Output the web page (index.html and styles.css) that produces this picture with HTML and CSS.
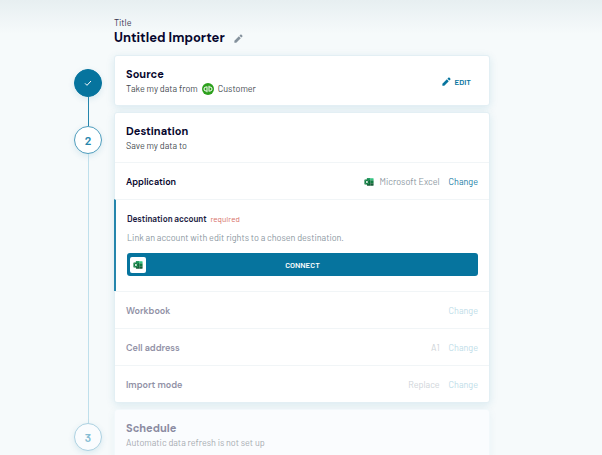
FILE: index.html
```html
<!DOCTYPE html>
<html lang="en">
<head>
    <meta charset="UTF-8">
    <meta name="viewport" content="width=device-width, initial-scale=1.0">
    <title>Untitled Importer</title>
    <link rel="stylesheet" href="styles.css">
</head>
<body>
    <!-- Shared icons -->
    <svg class="sprite" aria-hidden="true">
        <symbol id="pencil" viewBox="0 0 24 24">
            <path d="M1 18v5h5L18 11l-5-5zM22.500 6.500c.6-.6.6-1.400 0-2l-3-3c-.6-.6-1.400-.6-2 0L14.500 4.500l5 5z"/>
        </symbol>
        <symbol id="excel" viewBox="0 0 24 24">
            <path fill="#185c37" d="M7 3h8v18H8a1 1 0 0 1-1-1z"/>
            <path fill="#21a366" d="M8 3h7v5H7V4a1 1 0 0 1 1-1z"/>
            <path fill="#33c481" d="M15 3h7a1 1 0 0 1 1 1v4h-8z"/>
            <path fill="#107c41" d="M15 8h8v7h-8z"/>
            <path fill="#185c37" d="M15 15h8v5a1 1 0 0 1-1 1h-7z"/>
            <rect fill="#107c41" x="1" y="6" width="12" height="12" rx="1"/>
            <path fill="none" stroke="#fff" stroke-width="1.800" d="M4.500 9l5 6M9.500 9l-5 6"/>
        </symbol>
    </svg>

    <main class="container">
        <header class="title">
            <span class="title-label">Title</span>
            <div class="title-row">
                <h1>Untitled Importer</h1>
                <button class="icon-button" type="button" aria-label="Edit title">
                    <svg class="icon-pencil"><use href="#pencil"/></svg>
                </button>
            </div>
        </header>

        <ol class="steps">
            <li class="step done">
                <div class="rail">
                    <span class="circle">
                        <svg class="icon-check" viewBox="0 0 24 24"><path d="M3 13l6 6L21 6"/></svg>
                    </span>
                </div>
                <section class="card">
                    <div class="card-header">
                        <div>
                            <h2>Source</h2>
                            <p class="summary">
                                Take my data from
                                <svg class="icon-qb" viewBox="0 0 24 24">
                                    <circle cx="12" cy="12" r="12" fill="#2ca01c"/>
                                    <path fill="none" stroke="#fff" stroke-width="2" d="M9.500 8H8a4 4 0 0 0 0 8h1.500M10 7v11.500M14.500 16H16a4 4 0 0 0 0-8h-1.500M14 17V5.500"/>
                                </svg>
                                Customer
                            </p>
                        </div>
                        <button class="edit-button" type="button">
                            <svg class="icon-pencil"><use href="#pencil"/></svg>
                            EDIT
                        </button>
                    </div>
                </section>
            </li>

            <li class="step current">
                <div class="rail"><span class="circle">2</span></div>
                <section class="card">
                    <div class="card-header">
                        <div>
                            <h2>Destination</h2>
                            <p class="summary">Save my data to</p>
                        </div>
                    </div>
                    <div class="row">
                        <h3>Application</h3>
                        <span class="value">
                            <svg class="icon-excel"><use href="#excel"/></svg>
                            Microsoft Excel
                        </span>
                        <a href="#">Change</a>
                    </div>
                    <div class="account">
                        <h4>Destination account <span class="required">required</span></h4>
                        <p>Link an account with edit rights to a chosen destination.</p>
                        <button class="connect-button" type="button">
                            <span class="connect-icon"><svg class="icon-excel"><use href="#excel"/></svg></span>
                            <span class="connect-text">CONNECT</span>
                        </button>
                    </div>
                    <div class="row disabled">
                        <h3>Workbook</h3>
                        <a href="#">Change</a>
                    </div>
                    <div class="row disabled">
                        <h3>Cell address</h3>
                        <span class="value">A1</span>
                        <a href="#">Change</a>
                    </div>
                    <div class="row disabled">
                        <h3>Import mode</h3>
                        <span class="value">Replace</span>
                        <a href="#">Change</a>
                    </div>
                </section>
            </li>

            <li class="step upcoming">
                <div class="rail"><span class="circle">3</span></div>
                <section class="card">
                    <div class="card-header">
                        <div>
                            <h2>Schedule</h2>
                            <p class="summary">Automatic data refresh is not set up</p>
                        </div>
                    </div>
                </section>
            </li>
        </ol>
    </main>
</body>
</html>
```
FILE: styles.css
```css
* {
    box-sizing: border-box;
}

body {
    margin: 0;
    height: 100vh;
    overflow: hidden;
    font-family: Barlow, Roboto, sans-serif;
    font-size: 9px;
    line-height: 12px;
    color: #454b51;
    background: linear-gradient(#e7eff1, #f6fafb 34px) #f6fafb;
}

h1, h2, h3, h4, p, ol {
    margin: 0;
    padding: 0;
}

h1, h2, h3 {
    font-family: "DM Sans", Inter, sans-serif;
    color: #06062d;
}

button {
    font-family: inherit;
    border: none;
    background: none;
    padding: 0;
    cursor: pointer;
}

a {
    color: #177da6;
    text-decoration: none;
}

svg {
    display: block;
    flex: none;
}

.sprite {
    position: absolute;
    width: 0;
    height: 0;
}

.container {
    padding: 17px 112px 0 74px;
}

/* Title */
.title {
    margin-left: 40px;
    padding-bottom: 8px;
}

.title-label {
    display: block;
    color: #35354f;
}

.title-row {
    display: flex;
    align-items: center;
    gap: 9px;
}

h1 {
    font-size: 13px;
    line-height: 18px;
}

.icon-button {
    color: #84919c;
}

.icon-pencil {
    width: 9px;
    height: 9px;
    fill: currentColor;
}

/* Steps */
.steps {
    list-style: none;
}

.step {
    display: grid;
    grid-template-columns: 28px 1fr;
    gap: 12px;
}

.rail {
    display: flex;
    flex-direction: column;
    align-items: center;
}

.rail::before,
.rail::after {
    content: "";
    width: 1px;
    background-color: #bfdfeb;
}

.rail::before {
    height: 14px;
}

.rail::after {
    flex: 1;
}

.done .rail::after,
.current .rail::before {
    background-color: #2586ad;
}

.done .rail::before,
.upcoming .rail::after {
    background-color: transparent;
}

.circle {
    display: flex;
    align-items: center;
    justify-content: center;
    width: 28px;
    height: 28px;
    border: 1px solid #4f9dbd;
    border-radius: 50%;
    background-color: #fff;
    box-shadow: 0 2px 6px rgba(6, 116, 158, 0.12);
    font-size: 12px;
    font-weight: 600;
    color: #2586ad;
}

.done .circle {
    background-color: #06749e;
    border-color: #06749e;
}

.upcoming .circle {
    border-color: #acd1e1;
    background-color: #fafcfe;
    color: #85bdd4;
}

.icon-check {
    width: 8px;
    height: 8px;
    fill: none;
    stroke: #fff;
    stroke-width: 3;
}

/* Cards */
.card {
    margin-bottom: 6px;
    border: 1px solid #e3eff4;
    border-radius: 3px;
    background-color: #fff;
    box-shadow: 0 2px 8px rgba(6, 116, 158, 0.12);
}

.card-header {
    display: flex;
    align-items: center;
    justify-content: space-between;
    min-height: 49px;
    padding: 2px 18px 0 11px;
}

h2 {
    font-size: 11px;
    line-height: 14px;
}

.summary {
    display: flex;
    align-items: center;
    gap: 4px;
    line-height: 16px;
}

.icon-qb {
    width: 12px;
    height: 12px;
}

.edit-button {
    display: flex;
    align-items: center;
    gap: 4px;
    font-size: 8px;
    font-weight: 600;
    color: #06749e;
}

.upcoming .card {
    background-color: #fafcfe;
    border-color: #f2f8fb;
    box-shadow: 0 2px 8px rgba(6, 116, 158, 0.06);
}

.upcoming h2 {
    color: #8b8ba2;
}

.upcoming .summary {
    color: #a6abb1;
}

/* Rows */
.row {
    display: flex;
    align-items: center;
    gap: 9px;
    min-height: 37px;
    padding: 2px 11px 0;
    border-top: 1px solid #f1f5f7;
}

.row h3 {
    margin-right: auto;
    font-size: 9px;
    font-weight: 600;
}

.value {
    display: flex;
    align-items: center;
    gap: 6px;
    color: #8b97a1;
}

.disabled h3 {
    color: #9191a6;
}

.disabled .value {
    color: #cdd3d8;
}

.disabled a {
    color: #bddce8;
}

.icon-excel {
    width: 10px;
    height: 10px;
}

/* Destination account */
.account {
    margin-left: -1px;
    padding: 13px 11px 15px;
    border-top: 1px solid #f1f5f7;
    border-left: 2px solid #2586ad;
}

h4 {
    font-size: 9px;
    font-weight: 600;
    color: #1c1c42;
}

.required {
    margin-left: 2px;
    font-size: 8px;
    font-weight: 400;
    color: #d66e64;
}

.account p {
    margin: 7px 0 9px;
    color: #8b97a1;
}

.connect-button {
    display: flex;
    align-items: center;
    width: 100%;
    height: 23px;
    padding: 0 3px;
    border-radius: 3px;
    background-color: #06749e;
    font-size: 8px;
    font-weight: 600;
    color: #fff;
}

.connect-icon {
    padding: 3px;
    border-radius: 2px;
    background-color: #fff;
}

.connect-text {
    flex: 1;
    padding-right: 16px;
}
```
